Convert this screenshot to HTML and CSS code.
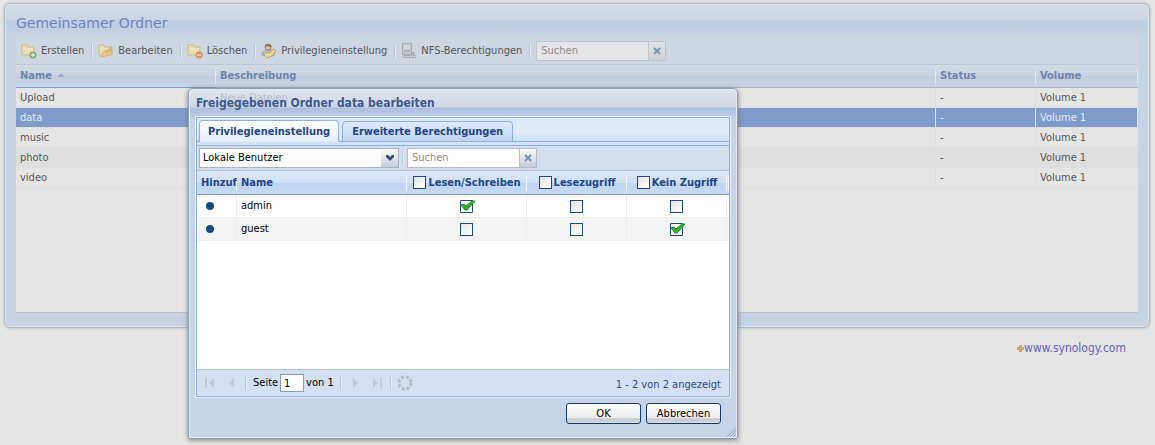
FILE: index.html
```html
<!DOCTYPE html>
<html lang="de">
<head>
<meta charset="UTF-8">
<meta name="viewport" content="width=device-width, initial-scale=1.0">
<title>Gemeinsamer Ordner</title>
<link rel="stylesheet" href="styles.css">
</head>
<body>

<main class="panel">
  <h1 class="titulo">Gemeinsamer Ordner</h1>
  <div class="inhalt">
    <div class="toolbar">
      <button class="tool" type="button">
        <svg class="icon" viewBox="0 0 16 16"><path d="M1 2h5l1 2h6v8H1z" fill="#e9dcb4" stroke="#cbb883"/><path d="M2 6h10" stroke="#f3ead0"/><circle cx="12" cy="12" r="3.5" fill="#7fae7c"/><path d="M10 12h4M12 10v4" stroke="#fff"/></svg>
        Erstellen</button>
      <i class="sep"></i>
      <button class="tool" type="button">
        <svg class="icon" viewBox="0 0 16 16"><path d="M1 2h5l1 2h7v8H1z" fill="#e9dcb4" stroke="#cbb883"/><path d="M3 14l3-6 8-1-2 5z" fill="#e6cf98" stroke="#d0b070"/><path d="M8 10l6-6" stroke="#dcae6c" stroke-width="2"/></svg>
        Bearbeiten</button>
      <i class="sep"></i>
      <button class="tool" type="button">
        <svg class="icon" viewBox="0 0 16 16"><path d="M1 2h5l1 2h6v8H1z" fill="#e9dcb4" stroke="#cbb883"/><path d="M2 6h10" stroke="#f3ead0"/><circle cx="12" cy="12" r="3.5" fill="#df8f60"/><path d="M10 12h4" stroke="#fff"/></svg>
        Löschen</button>
      <i class="sep"></i>
      <button class="tool" type="button">
        <svg class="icon" viewBox="0 0 16 16"><path d="M1 12q0-4 5-5h5l3 3-2 3z" fill="#b4c3d8" stroke="#8c9db8"/><circle cx="7" cy="4" r="3" fill="#dfc3a0" stroke="#9a8062"/><path d="M4 4q0-3 3-3t4 3q-4 0-5-1z" fill="#8c7558"/><path d="M3 12l3-3 3 1 3-4 3 2-4 5-5 2z" fill="#e8d48f" stroke="#c3a65a"/></svg>
        Privilegieneinstellung</button>
      <i class="sep"></i>
      <button class="tool" type="button">
        <svg class="icon" viewBox="0 0 16 16"><path d="M1.5.5h9v11h-9z" fill="#c6c8cd" stroke="#a9acb3"/><path d="M3 3h6M3 5h6" stroke="#e6e7ea"/><path d="M3 8h5" stroke="#9a9da5"/><path d="M2 13.500h13M12 9v5" fill="none" stroke="#acaeb5" stroke-width="3"/><path d="M3 13.500h11" stroke="#d8dade" stroke-dasharray="2 1"/></svg>
        NFS-Berechtigungen</button>
      <i class="sep"></i>
      <span class="suche">
        <input type="text" placeholder="Suchen" aria-label="Suchen"><button type="button" aria-label="Leeren"><svg viewBox="0 0 8 8"><path d="M1 1l6 6M7 1L1 7"/></svg></button>
      </span>
    </div>
    <table class="tabla ordner">
      <colgroup><col class="c-name"><col><col class="c-status"><col class="c-volume"></colgroup>
      <thead>
        <tr><th class="sortiert">Name <svg class="pfeil" viewBox="0 0 8 4"><path d="M0 4l4-4 4 4z"/></svg></th><th>Beschreibung</th><th>Status</th><th>Volume</th></tr>
      </thead>
      <tbody>
        <tr><td>Upload</td><td>Neue Dateien</td><td>-</td><td>Volume 1</td></tr>
        <tr class="aktiv"><td>data</td><td></td><td>-</td><td>Volume 1</td></tr>
        <tr><td>music</td><td></td><td>-</td><td>Volume 1</td></tr>
        <tr class="alt"><td>photo</td><td></td><td>-</td><td>Volume 1</td></tr>
        <tr><td>video</td><td></td><td>-</td><td>Volume 1</td></tr>
      </tbody>
    </table>
  </div>
</main>

<footer class="fuss"><svg viewBox="0 0 7 7"><path d="M0 3.500h7M3.500 0v7"/></svg><a href="#">www.synology.com</a></footer>

<div class="dialog" role="dialog" aria-labelledby="dialogTitel">
  <h2 id="dialogTitel">Freigegebenen Ordner data bearbeiten</h2>
  <div class="rahmen">
    <div class="tabs">
      <button class="tab offen" type="button">Privilegieneinstellung</button>
      <button class="tab" type="button">Erweiterte Berechtigungen</button>
    </div>
    <div class="filter">
      <span class="auswahl">
        <select aria-label="Benutzergruppe"><option>Lokale Benutzer</option></select>
        <svg viewBox="0 0 8 6"><path d="M0 0h2l2 2 2-2h2v2L4 6 0 2z"/></svg>
      </span>
      <i class="sep"></i>
      <span class="suche">
        <input type="text" placeholder="Suchen" aria-label="Benutzer suchen"><button type="button" aria-label="Leeren"><svg viewBox="0 0 8 8"><path d="M1 1l6 6M7 1L1 7"/></svg></button>
      </span>
    </div>
    <div class="liste">
      <table class="tabla rechte">
        <colgroup><col class="c-hinzu"><col><col class="c-rw"><col class="c-ro"><col class="c-na"><col class="c-rand"></colgroup>
        <thead>
          <tr>
            <th>Hinzuf</th>
            <th>Name</th>
            <th><label><input type="checkbox">Lesen/Schreiben</label></th>
            <th><label><input type="checkbox">Lesezugriff</label></th>
            <th><label><input type="checkbox">Kein Zugriff</label></th>
            <th></th>
          </tr>
        </thead>
        <tbody>
          <tr>
            <td><i class="punkt"></i></td><td>admin</td>
            <td><input type="checkbox" aria-label="admin Lesen/Schreiben" checked></td>
            <td><input type="checkbox" aria-label="admin Lesezugriff"></td>
            <td><input type="checkbox" aria-label="admin Kein Zugriff"></td>
            <td></td>
          </tr>
          <tr class="alt">
            <td><i class="punkt"></i></td><td>guest</td>
            <td><input type="checkbox" aria-label="guest Lesen/Schreiben"></td>
            <td><input type="checkbox" aria-label="guest Lesezugriff"></td>
            <td><input type="checkbox" aria-label="guest Kein Zugriff" checked></td>
            <td></td>
          </tr>
        </tbody>
      </table>
    </div>
    <div class="seiten">
      <button class="nav" type="button" aria-label="Erste Seite"><svg viewBox="0 0 12 12"><path d="M1 1h2v10H1zM10 1v10L5 6z"/></svg></button>
      <button class="nav" type="button" aria-label="Zurück"><svg viewBox="0 0 12 12"><path d="M8 1v10L3 6z"/></svg></button>
      <i class="sep"></i>
      <span class="seite"><label for="seite">Seite</label><input id="seite" type="text" value="1"><span>von 1</span></span>
      <i class="sep"></i>
      <button class="nav" type="button" aria-label="Weiter"><svg viewBox="0 0 12 12"><path d="M4 1v10l5-5z"/></svg></button>
      <button class="nav" type="button" aria-label="Letzte Seite"><svg viewBox="0 0 12 12"><path d="M9 1h2v10H9zM2 1v10l5-5z"/></svg></button>
      <i class="sep"></i>
      <button class="nav" type="button" aria-label="Neu laden"><svg class="laden" viewBox="0 0 16 16"><circle cx="8" cy="8" r="6"/></svg></button>
      <span class="anzahl">1 - 2 von 2 angezeigt</span>
    </div>
  </div>
  <div class="aktionen">
    <button class="boton" type="button">OK</button>
    <button class="boton" type="button">Abbrechen</button>
  </div>
  <svg class="griff" viewBox="0 0 9 9"><path d="M0 9l9-9M3 9l6-6M6 9l3-3"/></svg>
</div>

</body>
</html>
```

FILE: styles.css
```css
* {
  box-sizing: border-box;
}

body {
  margin: 0;
  padding: 3px 5px 0 4px;
  min-height: 100vh;
  background: #e5e5e5;
  font-family: "DejaVu Sans Condensed", "DejaVu Sans", sans-serif;
  font-size: 11px;
  line-height: 14px;
  color: #555;
}

button,
input,
select {
  margin: 0;
  padding: 0;
  border: 0;
  background: none;
  font: inherit;
  color: inherit;
}

svg {
  flex: none;
}

/* Hauptfenster */
.panel {
  min-height: 325px;
  padding: 0 11px 14px;
  display: flex;
  flex-direction: column;
  background: linear-gradient(#d6dce4, #cad5e3 16px, #bccee3 17px, #c6d3e3 33px);
  border: 1px solid #adb9c8;
  border-radius: 6px;
  box-shadow: inset 0 0 0 1px #dae3ee, 0 0 3px #b0b5bb;
}

.titulo {
  margin: 0;
  padding: 10px 0 5px;
  font-family: "DejaVu Sans", sans-serif;
  font-size: 14px;
  font-weight: normal;
  line-height: 19px;
  color: #7085b9;
}

.inhalt {
  flex: 1;
  background: #e5e5e5;
  border-bottom: 1px solid #b1c1d4;
}

.toolbar {
  height: 27px;
  padding: 0 5px;
  display: flex;
  align-items: center;
  gap: 5px;
  background: #ced6e1;
  border-bottom: 1px solid #b9c6d7;
}

.tool {
  padding-right: 2px;
  display: flex;
  align-items: center;
  gap: 4px;
  white-space: nowrap;
}

.icon {
  width: 16px;
  height: 16px;
}

.sep {
  width: 2px;
  height: 14px;
  background: #b5c6dc;
  border-right: 1px solid #e6ecf5;
}

.suche {
  display: flex;
  height: 20px;
}

.suche input {
  width: 113px;
  padding: 0 4px;
  background: #e5e5e5;
  border: 1px solid #bec4cc;
}

.suche input::placeholder {
  color: #8b8b8b;
  opacity: 1;
}

.suche button {
  width: 17px;
  display: flex;
  align-items: center;
  justify-content: center;
  background: linear-gradient(#e2e2e2, #cdd0d4);
  border: 1px solid #bec4cc;
  border-left: 0;
}

.suche svg {
  width: 8px;
  height: 8px;
  stroke: #7594bb;
  stroke-width: 2;
}

.tabla {
  width: 100%;
  table-layout: fixed;
  border-collapse: separate;
  border-spacing: 0;
}

.tabla th,
.tabla td {
  padding: 0 4px;
  text-align: left;
  white-space: nowrap;
  overflow: hidden;
}

.ordner th {
  height: 23px;
  color: #6b85ad;
  background: linear-gradient(#e3e9f1, #e3e9f1) right / 1px 15px no-repeat, linear-gradient(#d2d9e3, #c9d3e0 50%, #bfcddf 51%, #c9d5e4);
  border-bottom: 1px solid #a5b5cb;
}

.ordner th.sortiert {
  border-bottom-color: #7f9bcd;
}

.ordner td {
  height: 20px;
  padding-top: 1px;
  border-right: 1px solid #dedede;
  border-bottom: 1px solid #dedede;
}

.alt td {
  background: #dfdfdf;
}

.ordner .aktiv td {
  background: #7f9bcb;
  border-right-color: #dfe6ef;
  color: #e8edf5;
}

.pfeil {
  width: 8px;
  height: 4px;
  margin: 0 0 2px 2px;
  fill: #9db1cf;
}

.c-name { width: 200px; }
.c-status { width: 100px; }
.c-volume { width: 102px; }

.fuss {
  margin-top: 13px;
  padding-right: 24px;
  display: flex;
  align-items: center;
  justify-content: flex-end;
  font-size: 12px;
}

.fuss svg {
  width: 7px;
  height: 7px;
  stroke: #d8a070;
  stroke-width: 3;
}

.fuss a {
  color: #6160bc;
  text-decoration: none;
}

/* Dialog liegt ueber dem Hauptfenster */
.dialog {
  position: absolute;
  top: 88px;
  left: 188px;
  width: 550px;
  padding: 0 7px;
  color: #000;
  background: linear-gradient(rgba(222, 230, 241, 0.75), rgba(200, 210, 227, 0.75) 18px, rgba(174, 195, 226, 0.9) 19px, #c5d4e7 31px);
  border: 1px solid #8d9fb6;
  border-radius: 5px 5px 2px 2px;
  box-shadow: inset 0 0 0 1px #e1eaf5, 0 1px 5px #777;
}

.dialog h2 {
  margin: 0;
  padding: 7px 0;
  font-size: 12px;
  line-height: 14px;
  color: #3d598f;
}

.rahmen {
  border: 1px solid #8fb1df;
  box-shadow: 0 0 0 1px #e5eef9;
}

.tabs {
  height: 27px;
  padding: 2px 2px 0;
  display: flex;
  align-items: flex-end;
  gap: 3px;
  background: linear-gradient(#dbe9f8, #e0ecf9 60%, #c9def6);
  border-bottom: 3px solid #d3e2f4;
  box-shadow: inset 0 -1px #90b1de;
}

.tab {
  height: 21px;
  padding: 0 9px;
  font-weight: bold;
  color: #21468b;
  background: linear-gradient(#dfeafa, #cfdff4 55%, #bdd3f0);
  border: 1px solid #8fb1df;
  border-radius: 4px 4px 0 0;
}

.tab.offen {
  height: 22px;
  padding: 0 8px;
  background: linear-gradient(#fff, #e0edfc);
  border-bottom: 0;
}

.filter {
  height: 26px;
  padding: 0 2px;
  display: flex;
  align-items: center;
  gap: 3px;
  background: #d1deee;
  border-top: 1px solid #8fb1df;
  border-bottom: 1px solid #a9bfda;
}

.auswahl {
  display: flex;
  align-items: center;
}

.auswahl select {
  width: 200px;
  height: 20px;
  padding: 0 3px;
  appearance: none;
  background: linear-gradient(#fafafa, #c9cdd4) right / 17px 18px no-repeat, #fff;
  border: 1px solid #a9b2c1;
}

.auswahl svg {
  width: 8px;
  height: 6px;
  margin-left: -13px;
  margin-right: 5px;
  fill: #2d4c7c;
  pointer-events: none;
}

.dialog .suche input {
  background: #fff;
  border-color: #b2bccb;
}

.dialog .suche button {
  background: linear-gradient(#fafafa, #c9cdd4);
  border-color: #b2bccb;
}

.liste {
  min-height: 198px;
  background: #fff;
}

.rechte th {
  height: 24px;
  color: #21468b;
  background: linear-gradient(#f0f6ff, #f0f6ff) right / 1px 16px no-repeat, linear-gradient(#dbe7f6, #d1e0f4 50%, #bdd3f1 51%, #c7daf3);
  border-bottom: 1px solid #789ccc;
}

.rechte td {
  height: 23px;
  border-right: 1px solid #ededed;
  border-bottom: 1px solid #ededed;
}

.rechte .alt td {
  background: #f4f4f4;
}

.rechte label {
  display: flex;
  align-items: center;
  justify-content: center;
  gap: 2px;
}

.rechte td:nth-child(n+3) {
  text-align: center;
}

.rechte th:last-child,
.rechte td:last-child {
  padding: 0;
  border-right: 0;
}

.rechte input {
  appearance: none;
  width: 13px;
  height: 13px;
  flex: none;
  vertical-align: middle;
  background: linear-gradient(135deg, #e4e3dc, #fff);
  border: 1px solid #1c4a80;
}

.rechte input:checked {
  width: 15px;
  margin-right: -2px;
  border: 0;
  background: url("data:image/svg+xml,%3Csvg xmlns='http://www.w3.org/2000/svg' viewBox='0 0 15 13'%3E%3Cpath d='M.5.5h12v12H.5z' fill='%23fff' stroke='%231c4a80'/%3E%3Cpath d='M1 5l3-1 2 2 6-5 3 0-8 9H5z' fill='%2336ae2c' stroke='%23228c22'/%3E%3C/svg%3E");
}

.punkt {
  display: block;
  width: 8px;
  height: 8px;
  margin-left: 5px;
  border-radius: 50%;
  background: #154a80;
}

.c-hinzu { width: 40px; }
.c-rw { width: 120px; }
.c-ro { width: 100px; }
.c-na { width: 100px; }
.c-rand { width: 2px; }

.seiten {
  height: 27px;
  padding: 0 8px 0 4px;
  display: flex;
  align-items: center;
  gap: 4px;
  background: #d2e0f1;
  border-top: 1px solid #a9bfda;
}

.seite {
  display: flex;
  align-items: center;
  gap: 2px;
  padding: 0 2px;
}

.seiten input {
  width: 24px;
  height: 18px;
  padding: 0 3px;
  background: #fff;
  border: 1px solid #7f9db9;
}

.nav {
  width: 18px;
  height: 16px;
  display: flex;
  align-items: center;
  justify-content: center;
}

.nav svg {
  width: 12px;
  height: 12px;
  fill: #bccbda;
}

.nav .laden {
  width: 16px;
  height: 16px;
  fill: none;
  stroke: #b9bbc0;
  stroke-width: 3;
  stroke-dasharray: 3 1.710;
}

.anzahl {
  margin-left: auto;
  padding-top: 3px;
  color: #2f4a8c;
}

.aktionen {
  padding: 6px 9px 14px;
  display: flex;
  justify-content: flex-end;
  gap: 5px;
}

.boton {
  width: 75px;
  height: 21px;
  background: linear-gradient(#fff, #ececee 70%, #c8c8cc 80%, #dcdce0);
  border: 1px solid #123a66;
  border-radius: 3px;
}

.griff {
  position: absolute;
  right: 1px;
  bottom: 1px;
  width: 9px;
  height: 9px;
  stroke: #8fa9cc;
}
```
